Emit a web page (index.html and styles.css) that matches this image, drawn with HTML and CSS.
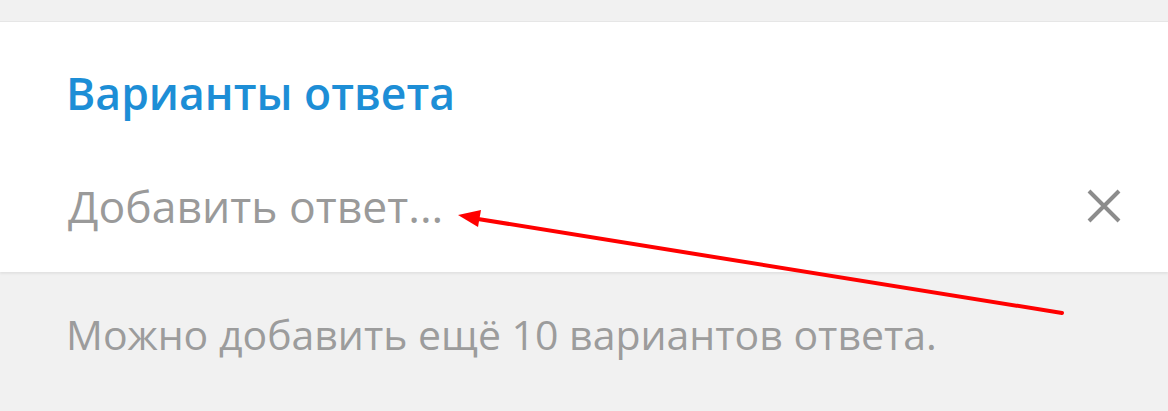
FILE: index.html
```html
<!DOCTYPE html>
<html lang="ru">
<head>
<meta charset="utf-8">
<link rel="stylesheet" href="styles.css">
</head>
<body>
<div class="page">
  <div class="topbar"></div>
  <div class="panel">
    <h2 class="title">Варианты ответа</h2>
    <div class="row">
      <span class="placeholder">Добавить ответ...</span>
      <svg class="close" width="36" height="36" viewBox="0 0 36 36"><path d="M3 3 L33 33 M33 3 L3 33" stroke="#8c8c8c" stroke-width="4" fill="none"/></svg>
    </div>
  </div>
  <div class="footer">Можно добавить ещё 10 вариантов ответа.</div>
  <svg class="arrow" width="1168" height="411" viewBox="0 0 1168 411">
    <line x1="1062" y1="313" x2="478" y2="219" stroke="#ff0000" stroke-width="4" stroke-linecap="round"/>
    <polygon points="458,215 481,210 478,227" fill="#ff0000"/>
  </svg>
</div>
</body>
</html>
```

FILE: styles.css
```css
html, body { margin: 0; padding: 0; }
body { background: #f1f1f1; font-family: "Open Sans", "DejaVu Sans", sans-serif; }
.page { position: relative; width: 1168px; height: 411px; overflow: hidden; }
.topbar { height: 21px; background: #f1f1f1; border-bottom: 1px solid #e6e6e6; }
.panel { background: #fff; height: 250px; box-shadow: 0 2px 2px rgba(0,0,0,0.06); padding: 47px 46px 0 66px; box-sizing: border-box; }
.title { margin: 0; font-size: 44.5px; line-height: 48px; font-weight: 600; color: #1d8ed6; }
.row { display: flex; align-items: center; justify-content: space-between; margin-top: 65px; padding-left: 2px; }
.placeholder { font-size: 44.5px; line-height: 48px; color: #9a9a9a; }
.close { display: block; }
.footer { padding: 38px 0 0 66px; font-size: 41px; line-height: 48px; color: #9c9c9c; }
.arrow { position: absolute; left: 0; top: 0; pointer-events: none; }
```
